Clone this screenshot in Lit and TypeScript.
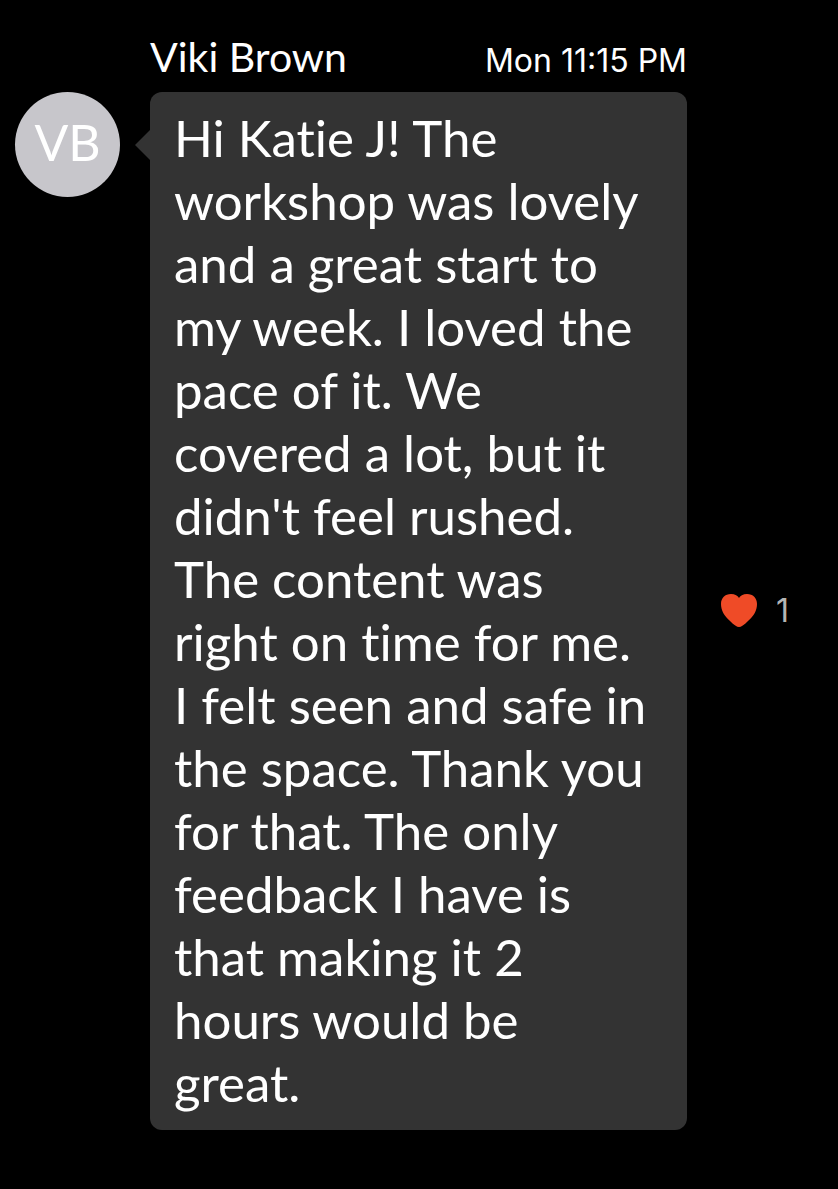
import { LitElement, html, css } from "lit";
import { customElement } from "lit/decorators.js";

const lines = [
  "Hi Katie J! The",
  "workshop was lovely",
  "and a great start to",
  "my week. I loved the",
  "pace of it. We",
  "covered a lot, but it",
  "didn't feel rushed.",
  "The content was",
  "right on time for me.",
  "I felt seen and safe in",
  "the space. Thank you",
  "for that. The only",
  "feedback I have is",
  "that making it 2",
  "hours would be",
  "great.",
];

@customElement("app-root")
export class AppRoot extends LitElement {
  static styles = css`
    :host {
      display: block;
      min-height: 100vh;
      box-sizing: border-box;
      padding: 36px 15px 59px;
      background: #000;
      color: #fff;
      font-family: Lato, sans-serif;
      font-variant-ligatures: none;
    }
    .message {
      display: grid;
      grid-template-columns: 105px minmax(0, 1fr) 106px;
      column-gap: 30px;
    }
    .head {
      grid-column: 2;
      display: flex;
      justify-content: space-between;
      align-items: baseline;
      height: 56px;
      line-height: 42px;
    }
    .name {
      font-size: 41px;
    }
    .time {
      font: 400 32px/42px Inter, sans-serif;
    }
    .avatar {
      grid-column: 1;
      width: 105px;
      height: 105px;
      border-radius: 50%;
      background: #c7c6cb;
      display: flex;
      align-items: center;
      justify-content: center;
      font-size: 50px;
      line-height: 60px;
      box-sizing: border-box;
      padding-bottom: 6px;
    }
    .bubble {
      grid-column: 2;
      position: relative;
      border-radius: 12px;
      background: #333;
      padding: 14px 24px 16px;
      font-size: 51px;
      line-height: 63px;
    }
    .bubble::before {
      content: "";
      position: absolute;
      left: -15px;
      top: 38px;
      border: solid transparent;
      border-width: 15px 15px 15px 0;
      border-right-color: #333;
    }
    .text {
      margin: 0;
      white-space: pre;
    }
    .like {
      align-self: center;
      display: flex;
      align-items: center;
      gap: 18px;
      padding: 0 0 2px 3px;
      border: 0;
      background: none;
      color: #b5b5b5;
      font: 400 32px Inter, sans-serif;
    }
    .heart {
      width: 38px;
      height: 35px;
    }
  `;

  render() {
    return html`
      <article class="message">
        <header class="head">
          <span class="name">Viki Brown</span>
          <time class="time">Mon 11:15 PM</time>
        </header>
        <div class="avatar">VB</div>
        <div class="bubble"><p class="text">${lines.join("\n")}</p></div>
        <button class="like" aria-label="Like, 1">
          <svg class="heart" viewBox="0 0 38 35" aria-hidden="true">
            <path fill="#ef4b27" d="M19 34C17 34 14 32 10 28C4 23 1 17 1 11C1 5 5 1 11 1C15 1 18 3 19 5C20 3 23 1 27 1C33 1 37 5 37 11C37 17 34 23 28 28C24 32 21 34 19 34Z" />
          </svg>
          <span>1</span>
        </button>
      </article>
    `;
  }
}
